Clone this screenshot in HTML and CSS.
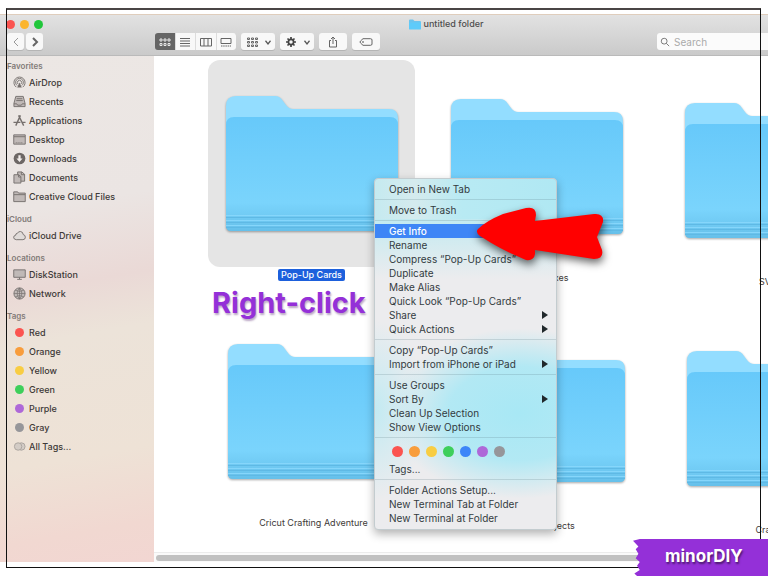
FILE: index.html
```html
<!DOCTYPE html>
<html lang="en">
<head>
<meta charset="utf-8">
<title>untitled folder</title>
<link rel="stylesheet" href="styles.css">
</head>
<body>
<svg class="defs" aria-hidden="true">
  <defs>
    <linearGradient id="front" x1="0" y1="0" x2="0" y2="1">
      <stop offset="0" stop-color="#67c9fa"/>
      <stop offset=".75" stop-color="#7ad4fc"/>
      <stop offset="1" stop-color="#66c0ea"/>
    </linearGradient>
    <symbol id="folder" viewBox="0 0 172 136">
      <path d="M0 10Q0 0 10 0H49Q54 0 57 5L60 9Q63 13 67 13H163Q172 13 172 22V128H0Z" fill="#93ddff"/>
      <path d="M0 29Q0 21 8 21H164Q172 21 172 29V130Q172 135 167 135H5Q0 135 0 130Z" fill="url(#front)"/>
      <path d="M0 121.500H172M0 126.500H172M0 131.500H172" stroke="#5fb9e5" stroke-width="1"/>
      <path d="M0 119.500H172M0 124.500H172M0 129.500H172" stroke="#86d6fb" stroke-width="1"/>
    </symbol>
  </defs>
</svg>

<main class="window">
  <header class="header">
    <div class="titlebar">
      <div class="lights"><i class="red"></i><i class="amber"></i><i class="green"></i></div>
      <h1 class="title"><svg viewBox="0 0 12 11"><path d="M0 1.500Q0 .5 1 .5H4L5.500 2H11Q12 2 12 3V10H0Z" fill="#6cc4ee"/><path d="M0 3.500H12V10Q12 10.500 11 10.500H1Q0 10.500 0 10Z" fill="#5ecbfa"/></svg>untitled folder</h1>
    </div>
    <div class="toolbar">
      <div class="nav">
        <button class="tool" aria-label="Back"><svg class="dim" viewBox="0 0 16 16"><path d="M10 4L6 8L10 12"/></svg></button>
        <button class="tool" aria-label="Forward"><svg class="strong" viewBox="0 0 16 16"><path d="M6 4L10 8L6 12"/></svg></button>
      </div>
      <div class="views">
        <button class="view on" aria-label="Icons"><svg viewBox="0 0 16 16"><path d="M3 5h2v2H3zM7 5h2v2H7zM11 5h2v2h-2zM3 9.500h2v2H3zM7 9.500h2v2H7zM11 9.500h2v2h-2z"/></svg></button>
        <button class="view" aria-label="List"><svg viewBox="0 0 16 16"><path d="M3 4.500H13M3 7H13M3 9.500H13M3 12H13"/></svg></button>
        <button class="view" aria-label="Columns"><svg viewBox="0 0 16 16"><path d="M2.500 4.500H13.500V12H2.500ZM6 4.500V12M10 4.500V12"/></svg></button>
        <button class="view" aria-label="Gallery"><svg viewBox="0 0 16 16"><path d="M3 4.500H13V9.500H3Z"/><path d="M3 12H13" stroke-dasharray="1.500 .7"/></svg></button>
      </div>
      <button class="tool wide" aria-label="Group"><svg viewBox="0 0 16 16"><path d="M3.500 4h2v1.500h-2zM7.500 4h2v1.500h-2zM11.500 4h2v1.500h-2zM3.500 7.500h2V9h-2zM7.500 7.500h2V9h-2zM11.500 7.500h2V9h-2zM3.500 11h2v1.500h-2zM7.500 11h2v1.500h-2zM11.500 11h2v1.500h-2z"/></svg><svg class="chev" viewBox="0 0 8 8"><path d="M2 3L4 5.500L6 3"/></svg></button>
      <button class="tool wide" aria-label="Actions"><svg viewBox="0 0 16 16"><circle cx="8" cy="8" r="2.600" stroke="#444" stroke-width="1.700"/><path stroke="#444" stroke-width="1.700" d="M8 3V5M8 11V13M3 8H5M11 8H13M4.500 4.500L6 6M10 10L11.500 11.500M11.500 4.500L10 6M6 10L4.500 11.500"/></svg><svg class="chev" viewBox="0 0 8 8"><path d="M2 3L4 5.500L6 3"/></svg></button>
      <button class="tool mid" aria-label="Share"><svg viewBox="0 0 16 16"><path d="M6 6.500H4.500V13H11.500V6.500H10M8 10V3M6 5L8 3L10 5"/></svg></button>
      <button class="tool mid" aria-label="Tags"><svg viewBox="0 0 16 16"><path d="M5 4.700H12.500Q14 4.700 14 6V10Q14 11.300 12.500 11.300H5L2.500 9Q1.500 8 2.500 7Z"/><circle cx="5" cy="8" r=".5"/></svg></button>
      <label class="search"><svg viewBox="0 0 12 12"><circle cx="5" cy="5" r="3.500"/><path d="M7.600 7.600L11 11"/></svg><input type="text" placeholder="Search" aria-label="Search"></label>
    </div>
  </header>

  <div class="panes">
    <nav class="sidebar">
      <h2>Favorites</h2>
      <ul>
        <li><a href="#"><svg viewBox="0 0 14 14"><path d="M3.500 12A6 6 0 1 1 10.500 12M4.500 10.200A4.200 4.200 0 1 1 9.500 10.200M5.500 8.700A2.300 2.300 0 1 1 8.500 8.700"/><path d="M7 7L9.500 12.500H4.500Z" fill="#756f6d" stroke="none"/></svg>AirDrop</a></li>
        <li><a href="#"><svg viewBox="0 0 14 14"><path class="fill" d="M3 1.500H11L13 9V12.500H1V9Z"/><path d="M1 9.500H4L5 11H9L10 9.500H13M4 4H10M3.500 6H10.500"/></svg>Recents</a></li>
        <li><a href="#"><svg viewBox="0 0 14 14"><path stroke-width="1.500" d="M8 1.500L3 12.500M6 1.500L11.500 12.500M.5 9H8M10.500 9H13.500"/></svg>Applications</a></li>
        <li><a href="#"><svg viewBox="0 0 14 14"><path class="fill" d="M.8 2H13.200V12H.8Z"/><path d="M1 4H13"/><path d="M3 10.500H11" stroke-dasharray="1 1"/></svg>Desktop</a></li>
        <li><a href="#"><svg viewBox="0 0 14 14"><circle cx="7" cy="7" r="6.300" fill="#6d6765" stroke="none"/><path d="M5.800 3.500H8.200V7H10.300L7 10.800L3.700 7H5.800Z" fill="#f3eeec" stroke="none"/></svg>Downloads</a></li>
        <li><a href="#"><svg viewBox="0 0 14 14"><path class="fill" d="M5 1H9.500L12.500 3.500V11H5Z"/><path class="fill" d="M1 4H6L8.500 6V13H1Z"/><path d="M6 4V6.500H8.500M9 1V4H12.500"/></svg>Documents</a></li>
        <li><a href="#"><svg viewBox="0 0 14 14"><path class="fill" d="M.8 2H5L6 3.300H13.200V12.500H.8Z"/><path d="M1 5H13"/></svg>Creative Cloud Files</a></li>
      </ul>
      <h2>iCloud</h2>
      <ul>
        <li><a href="#"><svg viewBox="0 0 14 14"><path d="M3.500 11.500Q.7 11.300.7 8.900Q.8 7 2.800 6.800Q2.800 4.600 4.600 4.800Q5.700 2.500 8 2.700Q10.800 3 11 6Q13.300 6.500 13.300 8.900Q13.200 11.500 10.700 11.500Z" fill="#e0dbd9"/></svg>iCloud Drive</a></li>
      </ul>
      <h2>Locations</h2>
      <ul>
        <li><a href="#"><svg viewBox="0 0 14 14"><path class="fill" d="M.8 2H13.200V10H.8Z"/><path d="M7 10V12M4.500 12.200H9.500"/></svg>DiskStation</a></li>
        <li><a href="#"><svg viewBox="0 0 14 14"><circle class="fill" cx="7" cy="7" r="6"/><path d="M7 1V13M1 7H13M2.500 3.500Q7 6 11.500 3.500M2.500 10.500Q7 8 11.500 10.500M7 1Q2 7 7 13M7 1Q12 7 7 13" stroke-width=".7"/></svg>Network</a></li>
      </ul>
      <h2>Tags</h2>
      <ul>
        <li><a href="#"><i class="dot red"></i>Red</a></li>
        <li><a href="#"><i class="dot orange"></i>Orange</a></li>
        <li><a href="#"><i class="dot yellow"></i>Yellow</a></li>
        <li><a href="#"><i class="dot green"></i>Green</a></li>
        <li><a href="#"><i class="dot purple"></i>Purple</a></li>
        <li><a href="#"><i class="dot gray"></i>Gray</a></li>
        <li><a href="#"><svg viewBox="0 0 14 14"><circle cx="9" cy="7" r="4" fill="#d3ccc6" stroke="#aaa39e"/><circle cx="5.500" cy="7" r="4" fill="#d3ccc6" stroke="#aaa39e"/></svg>All Tags...</a></li>
      </ul>
    </nav>

    <section class="content">
      <ul class="icons">
        <li class="selected"><div class="tile"><svg><use href="#folder"/></svg></div><span>Pop-Up Cards</span></li>
        <li><div class="tile"><svg><use href="#folder"/></svg></div><span>Surprise Boxes</span></li>
        <li><div class="tile"><svg><use href="#folder"/></svg></div><span>SVGs</span></li>
      </ul>
      <ul class="icons second">
        <li><div class="tile"><svg><use href="#folder"/></svg></div><span>Cricut Crafting Adventure</span></li>
        <li><div class="tile"><svg><use href="#folder"/></svg></div><span>Summer Projects</span></li>
        <li><div class="tile"><svg><use href="#folder"/></svg></div><span>Crafting</span></li>
      </ul>
      <div class="scroll"><div class="thumb"></div></div>
    </section>
  </div>
</main>

<div class="menu" role="menu">
  <button role="menuitem">Open in New Tab</button>
  <hr>
  <button role="menuitem">Move to Trash</button>
  <hr>
  <button role="menuitem" class="active">Get Info</button>
  <button role="menuitem">Rename</button>
  <button role="menuitem">Compress “Pop-Up Cards”</button>
  <button role="menuitem">Duplicate</button>
  <button role="menuitem">Make Alias</button>
  <button role="menuitem">Quick Look “Pop-Up Cards”</button>
  <button role="menuitem" class="more">Share</button>
  <button role="menuitem" class="more">Quick Actions</button>
  <hr>
  <button role="menuitem">Copy “Pop-Up Cards”</button>
  <button role="menuitem" class="more">Import from iPhone or iPad</button>
  <hr>
  <button role="menuitem">Use Groups</button>
  <button role="menuitem" class="more">Sort By</button>
  <button role="menuitem">Clean Up Selection</button>
  <button role="menuitem">Show View Options</button>
  <hr>
  <div class="swatches"><i class="red"></i><i class="orange"></i><i class="yellow"></i><i class="green"></i><i class="blue"></i><i class="purple"></i><i class="gray"></i></div>
  <button role="menuitem">Tags...</button>
  <hr>
  <button role="menuitem">Folder Actions Setup...</button>
  <button role="menuitem">New Terminal Tab at Folder</button>
  <button role="menuitem">New Terminal at Folder</button>
</div>

<p class="callout">Right-click</p>
<svg class="arrow" viewBox="0 0 128 54" aria-hidden="true"><path d="M2 22Q10 14 27 7L50 1Q60-1 60 8L59 14L118 7Q128 6 127 15L121 30L126 43Q128 52 118 52L59 43V47Q58 54 50 53Q27 44 4 29Q-1 25 2 22Z" fill="#f00"/></svg>
<div class="frame"></div>
<footer class="ribbon">minorDIY</footer>
</body>
</html>
```
FILE: styles.css
```css
* { box-sizing: border-box; }

body {
  margin: 0;
  height: 100vh;
  padding: 14px 0;
  position: relative;
  overflow: hidden;
  background: #fff;
  color: #3d3937;
  font: 10px/14px Inter, "Liberation Sans", sans-serif;
}

ul { list-style: none; margin: 0; padding: 0; }
button { font: inherit; color: inherit; border: 0; margin: 0; padding: 0; background: none; }
svg { fill: none; stroke: #656565; stroke-width: 1; display: block; flex: none; }
.defs { position: absolute; width: 0; height: 0; }

.red { background: #fb5450; }
.amber { background: #fbb52e; }
.orange { background: #f89d3c; }
.yellow { background: #f8cd42; }
.green { background: #3ecf5b; }
.blue { background: #3d86f8; }
.purple { background: #ae68d8; }
.gray { background: #96969a; }

.window { height: 100%; display: flex; flex-direction: column; }

.header {
  padding-bottom: 5px;
  border-top: 1px solid #dfcdbc;
  border-bottom: 1px solid #bababa;
  background: linear-gradient(#e2e2e2, #cacaca);
}
.titlebar { display: flex; align-items: center; height: 18px; padding-left: 6px; }
.lights { display: flex; gap: 5px; width: 118px; }
.lights i { width: 9px; height: 9px; border-radius: 50%; }
.lights .green { background: #20c63a; }
.title {
  flex: 1;
  display: flex;
  align-items: center;
  justify-content: center;
  gap: 3px;
  margin: 0;
  font-size: 9px;
  font-weight: 500;
  color: #4e4e4e;
}
.title svg { width: 12px; height: 11px; stroke: none; }

.toolbar { display: flex; gap: 5px; padding-left: 7px; height: 17px; }
.nav { display: flex; gap: 2px; width: 143px; }
.tool, .view {
  display: flex;
  align-items: center;
  justify-content: center;
  width: 17px;
  height: 17px;
  border-radius: 3px;
  background: #f8f8f8;
  box-shadow: 0 1px 0 #b5b5b5;
}
.tool svg, .view svg { width: 16px; height: 16px; }
.tool .strong { stroke: #666; stroke-width: 2; }
.tool .dim { stroke: #999; }
.tool .chev { width: 10px; height: 10px; stroke: #555; }
.wide { width: 34px; gap: 3px; }
.mid { width: 28px; }
.views { display: flex; gap: 1px; width: 81px; border-radius: 3px; overflow: hidden; background: #dcdcdc; }
.view { flex: 1; border-radius: 0; }
.view.on { background: #656565; }
.view.on svg { stroke: #e8e8e8; }
.search {
  display: flex;
  align-items: center;
  gap: 4px;
  width: 111px;
  margin-left: auto;
  padding-left: 3px;
  border-radius: 3px 0 0 3px;
  background: #fbfbfb;
}
.search svg { width: 10px; height: 10px; }
.search input { width: 80px; border: 0; padding: 0; background: none; font: inherit; }
.search input::placeholder { color: #aaa; opacity: 1; }

.panes { flex: 1; display: flex; min-height: 0; }
.sidebar {
  flex: none;
  width: 154px;
  padding: 3px 0 0 7px;
  overflow: hidden;
  font-size: 9px;
  font-weight: 500;
  background: linear-gradient(170deg, #ece7e4 0, #ebe5e3 30%, #ead9d6 45%, #ece3d9 55%, #eee2d6 78%, #f1d8d1 92%, #f2d6d2 100%);
}
.sidebar h2 { margin: 0; font-size: 8px; line-height: 14px; font-weight: 600; color: #827b78; }
.sidebar ul { margin-bottom: 6px; }
.sidebar a {
  display: flex;
  align-items: center;
  gap: 3px;
  height: 19px;
  padding-left: 6px;
  color: inherit;
  text-decoration: none;
}
.sidebar svg { width: 13px; height: 13px; stroke: #756f6d; }
.sidebar .fill { fill: #c0b9b7; }
.sidebar .dot { width: 9px; height: 9px; margin: 0 2px; border-radius: 50%; }

.content { flex: 1; min-width: 0; display: flex; flex-direction: column; overflow: hidden; background: #fff; }
.icons {
  display: grid;
  grid-template-columns: 225px 234px 207px;
  height: 248px;
  flex: none;
  padding-left: 54px;
}
.icons:first-child { margin-top: 4px; }
.icons.second { height: 240px; padding-left: 56px; }
.icons li { display: flex; flex-direction: column; align-items: center; width: 207px; }
.icons li:nth-child(2) { padding-top: 3px; }
.icons li:nth-child(3) { padding-top: 7px; }
.tile { width: 207px; height: 207px; padding: 36px 17px 0 18px; border-radius: 12px; flex: none; }
.tile svg { width: 172px; height: 136px; stroke: none; filter: drop-shadow(0 1px 1px rgba(0, 0, 0, .35)); }
.icons span { margin-top: 2px; padding: 0 3px; border-radius: 2px; font-size: 9px; line-height: 12px; white-space: nowrap; }
.selected .tile { background: #e5e5e5; }
.selected span { background: #1d60dc; color: #fff; font-weight: 500; }
.scroll { margin-top: auto; height: 10px; padding: 2px; background: #fafafa; border-top: 1px solid #ececec; flex: none; }
.thumb { height: 6px; border-radius: 3px; background: #c1c1c1; }

.menu {
  position: absolute;
  left: 374px;
  top: 178px;
  width: 183px;
  padding: 3px 0 4px;
  border: 1px solid #c3cccf;
  border-radius: 4px;
  color: #333b3f;
  background:
    radial-gradient(ellipse 130px 85px at 80% 67%, #a8e8f5 0, rgba(168, 232, 245, .85) 55%, rgba(168, 232, 245, 0) 100%),
    radial-gradient(ellipse 50px 90px at 0 66%, rgba(190, 234, 243, .9), rgba(190, 234, 243, 0)),
    linear-gradient(90deg, #c5eaf0, #d5ebee 22%, #b8eaf3 48%, #b0e8f3) 0 0 / 100% 40px no-repeat,
    linear-gradient(#c2eaf1, #ececee) 0 40px / 100% 60px no-repeat,
    #ececee;
  box-shadow: 0 4px 10px rgba(0, 0, 0, .3);
}
.menu button { display: block; width: 100%; height: 14px; padding: 0 8px 0 14px; text-align: left; line-height: 14px; }
.menu hr { height: 1px; margin: 3px 0; border: 0; background: rgba(80, 110, 120, .2); }
.menu .active { background: #3e86f6; color: #fff; font-weight: 500; }
.menu .more { display: flex; align-items: center; justify-content: space-between; }
.menu .more::after { content: ""; border-left: 6px solid #20282b; border-top: 4px solid transparent; border-bottom: 4px solid transparent; }
.swatches { display: flex; align-items: center; gap: 6px; height: 21px; padding-left: 17px; }
.swatches i { width: 11px; height: 11px; border-radius: 50%; }

.callout {
  position: absolute;
  left: 212px;
  top: 286px;
  margin: 0;
  font-size: 29px;
  line-height: 34px;
  font-weight: 700;
  color: #9430d8;
  text-shadow: 1px 2px 2px rgba(60, 0, 90, .35);
}
.arrow { position: absolute; left: 476px; top: 207px; width: 128px; height: 54px; overflow: visible; stroke: none; filter: drop-shadow(1px 4px 4px rgba(0, 0, 0, .6)); }
.frame {
  position: absolute;
  inset: 8px 7px 8px 6px;
  border: 1px solid #111;
  border-top: 2px solid #4a4545;
  pointer-events: none;
}
.ribbon {
  position: absolute;
  right: 0;
  bottom: 0;
  width: 135px;
  height: 37px;
  padding: 7px 0 0 32px;
  background: #9430d8;
  clip-path: polygon(0 5%, 5% 0, 100% 0, 100% 100%, 3% 100%, 1% 93%, 5% 84%, 3% 72%, 5% 62%, 2% 52%, 4% 40%, 2% 28%, 4% 20%);
  color: #fff;
  font-size: 17px;
  line-height: 20px;
  font-weight: 700;
  text-shadow: 1px 2px 2px rgba(0, 0, 0, .5);
}
```
